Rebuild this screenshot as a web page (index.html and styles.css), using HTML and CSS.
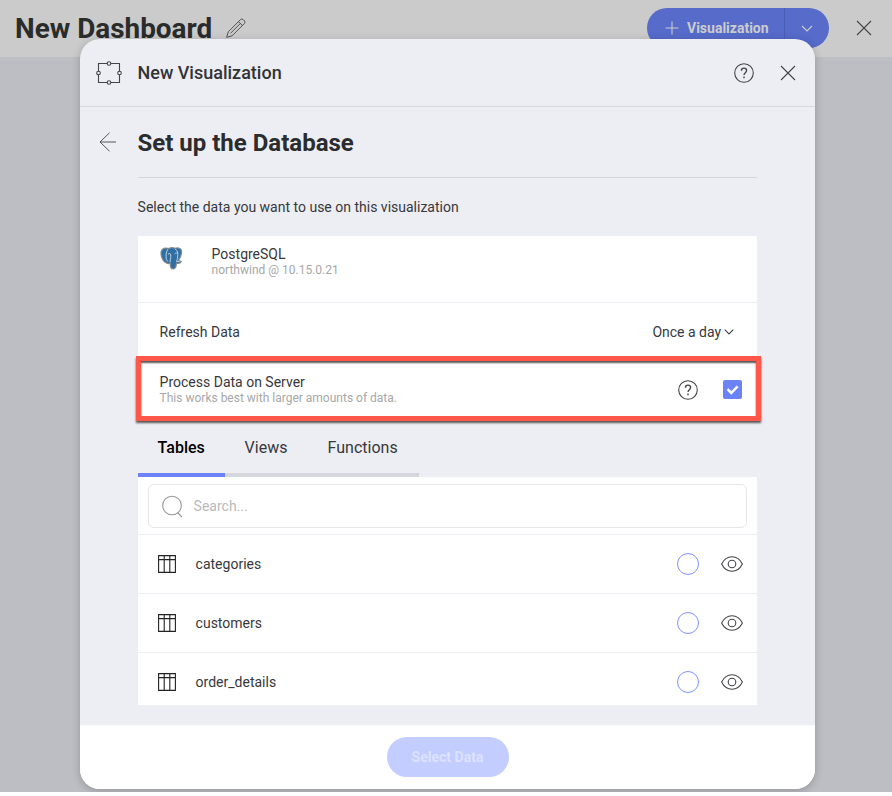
FILE: index.html
```html
<!DOCTYPE html>
<html lang="en">
<head>
<meta charset="utf-8">
<title>New Dashboard</title>
<link rel="stylesheet" href="styles.css">
</head>
<body>
<svg class="defs" width="0" height="0" aria-hidden="true">
  <symbol id="close" viewBox="0 0 16 16"><path d="M1 1l14 14M15 1L1 15"/></symbol>
  <symbol id="help" viewBox="0 0 20 20"><circle cx="10" cy="10" r="9.3"/><path class="mark" d="M7.4 7.7C7.4 6 8.500 5.100 10 5.100s2.600.9 2.600 2.500c0 2-2.600 2.200-2.600 4.500M10 13.600v1.700"/></symbol>
  <symbol id="table" viewBox="0 0 18 18"><path d="M.6.6h16.8v16.8H.6zM.6 4.600h16.800M6.200.6v16.800M11.800.6v16.800"/></symbol>
  <symbol id="eye" viewBox="0 0 22 16"><path d="M.6 8C3 3.200 6.700.8 11 .8S19 3.200 21.400 8C19 12.800 15.300 15.200 11 15.200S3 12.800.6 8z"/><circle cx="11" cy="8" r="3.800"/></symbol>
</svg>
<div class="page">
  <header class="topbar">
    <h1>New Dashboard</h1>
    <svg class="pencil" viewBox="0 0 20 20"><path d="M.7 19.300l1.500-5.400L14.500 1.600q1.300-1.300 2.700 0l1.200 1.200q1.300 1.400 0 2.700L6.100 17.800zM12.500 3.600l4 4M14.300 5.500L4.500 15.300"/></svg>
    <div class="split">
      <div class="split-main"><svg class="plus" viewBox="0 0 14 14"><path d="M7 .5v13M.5 7h13"/></svg>Visualization</div>
      <div class="split-menu"><svg class="chev" viewBox="0 0 12 7"><path d="M1 1l5 5 5-5"/></svg></div>
    </div>
    <svg class="close"><use href="#close"/></svg>
  </header>

  <section class="modal">
    <div class="modal-head">
      <svg class="viz" viewBox="0 0 26 24"><path d="M2.500 2.500h21v19h-21z"/><g class="dot"><circle cx="13" cy="2.500" r="1.800"/><circle cx="13" cy="21.500" r="1.800"/><circle cx="2.500" cy="12" r="1.800"/><circle cx="23.500" cy="12" r="1.800"/></g></svg>
      <h2>New Visualization</h2>
      <svg class="help"><use href="#help"/></svg>
      <svg class="close"><use href="#close"/></svg>
    </div>
    <div class="modal-body">
      <div class="title">
        <svg class="back" viewBox="0 0 18 20"><path d="M17 10H1M10.500.8L1 10l9.500 9.200"/></svg>
        <h3>Set up the Database</h3>
      </div>
      <div class="content">
        <p class="intro">Select the data you want to use on this visualization</p>
        <div class="source">
          <svg class="pg" viewBox="0 0 23 23">
            <path class="pg-edge" d="M1.200 4.500C2.300.7 6 .8 8.600 1.500 11 .5 13.500.6 15 1.300c3-1 6.700-.2 6.500 2.900.2 3-1.200 6.600-3 9.200 1 .8 2.300.4 2.800.9-.5 1.700-3 2.300-4.800 2-.4 2.200-.2 5.400-3 5.700-3 .2-3.200-2.200-3.400-6-1.200.9-3.300.6-4.300-.5C2.700 15 .4 8 1.200 4.500z"/>
            <path class="pg-line" d="M7.900 2.200C5.600 5.500 6 9 6.300 12.300l1.500 2.200M8 7.200c1.200-1 2.800-.8 2.700.8-.1 2 .3 3.500-.5 5.200l-.2 2M15.200 2c2.300 2 3.200 4 2.500 6.500-.2 1.800.1 3.600-1.200 5.300M14.700 6.800c.8-.8 1.800-1 2.800-.6M16.200 14.300l3.400.4"/>
          </svg>
          <div><div class="name">PostgreSQL</div><div class="sub">northwind @ 10.15.0.21</div></div>
        </div>
        <div class="refresh">
          <span>Refresh Data</span>
          <span class="select">Once a day<svg class="caret" viewBox="0 0 10 6"><path d="M.7.7L5 5 9.300.7"/></svg></span>
        </div>
        <div class="process">
          <div class="process-text"><div class="name">Process Data on Server</div><div class="sub">This works best with larger amounts of data.</div></div>
          <svg class="help"><use href="#help"/></svg>
          <svg class="check" viewBox="0 0 19 19"><path d="M4.500 9.200l3.700 3.700 6.500-6.500"/></svg>
          <div class="highlight"></div>
        </div>
        <nav class="tabs"><span class="tab active">Tables</span><span class="tab views">Views</span><span class="tab functions">Functions</span></nav>
        <div class="list">
          <div class="search-wrap"><div class="search"><svg class="lens" viewBox="0 0 21 23"><circle cx="10" cy="10.500" r="9.300"/><path d="M15.500 17.500l4.500 4.500"/></svg>Search...</div></div>
          <div class="row"><svg class="table"><use href="#table"/></svg><span>categories</span><i class="radio"></i><svg class="eye"><use href="#eye"/></svg></div>
          <div class="row"><svg class="table"><use href="#table"/></svg><span>customers</span><i class="radio"></i><svg class="eye"><use href="#eye"/></svg></div>
          <div class="row"><svg class="table"><use href="#table"/></svg><span>order_details</span><i class="radio"></i><svg class="eye"><use href="#eye"/></svg></div>
        </div>
      </div>
    </div>
    <footer class="modal-foot"><div class="button">Select Data</div></footer>
  </section>
</div>
</body>
</html>
```
FILE: styles.css
```css
* { box-sizing: border-box; }
body { margin: 0; background: #fff; color: #37383b; font: 14px/18px Roboto, sans-serif; overflow: hidden; }
h1, h2, h3, p { margin: 0; }
svg { display: block; flex: none; fill: none; stroke: #434447; stroke-width: 1.1; }
.defs { position: absolute; }
.page { position: relative; width: 892px; height: 792px; background: #bdbec3; overflow: hidden; }

.topbar { display: flex; align-items: center; height: 57px; padding: 0 20px 1px 15px; background: #cbcbcb; }
.topbar h1 { width: 197px; padding-top: 2px; font-size: 27.9px; line-height: 36px; font-weight: 700; color: #2a2b2b; white-space: nowrap; }
.pencil { width: 20px; height: 20px; margin-left: 14px; stroke-width: .9; }
.split { display: flex; width: 182px; height: 40px; margin-left: auto; border-radius: 20px; background: #566bca; color: #cbcbcb; overflow: hidden; }
.split svg { stroke: #cbcbcb; }
.split-main { display: flex; align-items: center; width: 138px; padding-left: 18px; font-weight: 700; border-right: 1px solid #4b5eb4; white-space: nowrap; }
.plus { width: 14px; height: 14px; margin-right: 8px; }
.split-menu { display: flex; flex: 1; align-items: center; justify-content: center; }
.chev { width: 12px; height: 7px; }
.close { width: 16px; height: 16px; }
.topbar .close { margin-left: 27px; }

.modal { position: absolute; left: 80px; top: 39px; display: flex; flex-direction: column; width: 735px; height: 750px; border-radius: 20px; background: #edeef4; overflow: hidden; box-shadow: 0 2px 8px rgba(0, 0, 0, .22); }
.modal-head { display: flex; align-items: center; height: 68px; padding: 0 19px 0 16px; border-bottom: 1px solid #d8d9de; }
.viz { width: 26px; height: 24px; }
.dot { fill: #edeef4; }
.modal-head h2 { flex: 1; margin-left: 15.5px; font-size: 18px; line-height: 24px; font-weight: 500; color: #323336; }
.help { width: 20px; height: 20px; }
.mark { stroke-width: 1.4; }
.modal-head .help { margin-right: 26px; }
.modal-body { flex: 1; }
.title { display: flex; align-items: center; height: 70px; margin-left: 19px; }
.back { width: 18px; height: 20px; margin-right: 20.5px; stroke-width: .9; }
.title h3 { flex: 1; padding-top: 1px; font-size: 24px; line-height: 30px; font-weight: 700; color: #2b2c2e; }
.content { width: 619.5px; margin-left: 57.6px; border-top: 1px solid #d5d6db; }
.intro { height: 58px; padding-top: 20px; }
.source, .refresh, .process { display: flex; background: #fff; }
.source { height: 67px; padding: 10px 22px; border-bottom: 1px solid #edeef4; }
.pg { width: 23px; height: 23px; margin: 1px 29px 0 0; }
.pg-edge { fill: #2f6fa5; stroke: #85898d; stroke-width: 1.2; }
.pg-line { stroke: #cfdce5; stroke-width: .9; }
.name { line-height: 16px; }
.sub { line-height: 16px; font-size: 12px; color: #a7a7a7; }
.refresh { height: 58px; align-items: center; justify-content: space-between; padding: 0 23px 0 22px; }
.select { display: flex; align-items: center; }
.caret { width: 10px; height: 6px; margin-left: 3px; }
.process { position: relative; height: 57px; align-items: center; padding: 0 15px 0 22px; }
.process-text { flex: 1; }
.check { width: 19px; height: 19px; margin-left: 25px; border-radius: 2px; background: #6b83f7; stroke: #fff; stroke-width: 2.5; }
.highlight { position: absolute; left: -2px; top: -5px; width: 625px; height: 65px; border: 5px solid #ff5749; box-shadow: 0 2px 2px #555, inset 0 2px 2px #555; }
.tabs { display: flex; width: 281px; height: 59px; border-bottom: 4px solid #d6d7dc; font-size: 16px; line-height: 60px; }
.tab { height: 59px; }
.active { width: 87px; padding-left: 20px; border-bottom: 4px solid #6b83f7; font-weight: 500; color: #000; }
.views { padding-left: 20px; width: 83px; }
.functions { padding-left: 20px; }
.list { height: 228px; background: #fff; overflow: hidden; }
.search-wrap { height: 57px; padding: 7px 10px; }
.search { display: flex; align-items: center; height: 44px; border: 1px solid #e7e7e7; border-radius: 6px; padding-left: 13px; color: #b9b9b9; }
.lens { width: 21px; height: 23px; margin-right: 11px; stroke: #999; }
.row { display: flex; align-items: center; height: 59px; padding: 0 14px 0 20px; border-top: 1px solid #edeef4; }
.row span { flex: 1; margin-left: 20px; }
.table { width: 18px; height: 18px; stroke: #222; }
.radio { width: 22px; height: 22px; border: 1.2px solid #7f94ff; border-radius: 50%; margin-right: 22px; }
.eye { width: 22px; height: 16px; }
.modal-foot { display: flex; justify-content: center; height: 64px; padding-top: 12px; background: #fff; }
.button { width: 122px; height: 40px; border-radius: 20px; background: #c4cdff; color: #dce2ff; line-height: 40px; font-weight: 700; text-align: center; }
```
